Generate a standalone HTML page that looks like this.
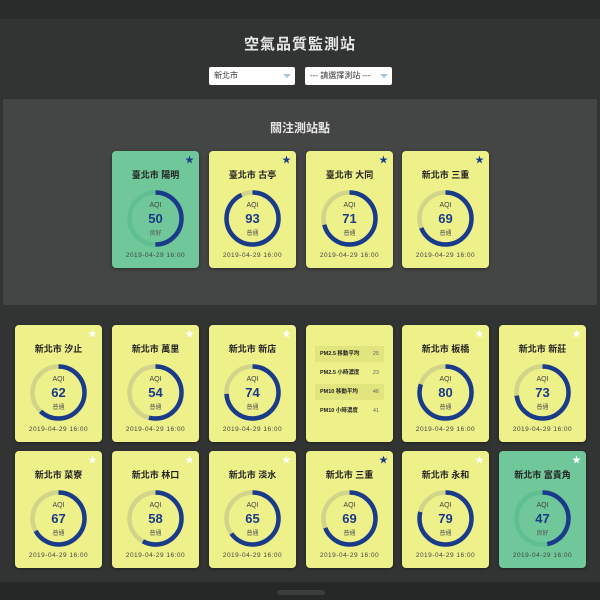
<!DOCTYPE html>
<html><head><meta charset="utf-8"><style>
*{margin:0;padding:0;box-sizing:border-box}
body{width:600px;height:600px;background:#323434;position:relative;overflow:hidden;font-family:"Liberation Sans","Noto Sans CJK TC",sans-serif}
.top{position:absolute;left:0;top:0;width:600px;height:19px;background:#2a2c2c}
.bot{position:absolute;left:0;top:582px;width:600px;height:18px;background:#262828}
.handle{position:absolute;left:277px;top:590px;width:48px;height:5px;border-radius:3px;background:#3c3e3e}
h1{position:absolute;top:33px;width:600px;text-align:center;color:#e6e6e6;font-size:15px;font-weight:bold;letter-spacing:1px}
.sel{position:absolute;top:67px;height:18px;background:#fff;border-radius:2px;font-size:8px;color:#333;padding:4px 5px;line-height:10px}
.sel:after{content:"";position:absolute;right:4px;top:7px;border:4px solid transparent;border-top:4px solid #a8c4dc}
.panel{position:absolute;left:3px;top:99px;width:594px;height:206px;background:#444545;border-radius:2px}
.ptitle{position:absolute;top:119px;width:600px;text-align:center;color:#e6e6e6;font-size:12px;font-weight:bold}
.c{position:absolute;width:87px;height:117px;background:#eef08a;border-radius:4px;box-shadow:0 1px 3px rgba(0,0,0,.4)}
.g{background:#6fc79a}
.c .t{position:absolute;top:17px;width:100%;text-align:center;font-size:9px;font-weight:bold;color:#222}
.c svg{position:absolute;left:13px;top:37px}
.c .a{position:absolute;top:51px;width:100%;text-align:center;font-size:7px;color:#444}
.c .n{position:absolute;top:60px;width:100%;text-align:center;font-size:13px;font-weight:bold;color:#1a3a8a}
.c .s{position:absolute;top:77px;width:100%;text-align:center;font-size:6px;color:#555}
.c .d{position:absolute;top:101px;width:100%;text-align:center;font-size:6.5px;color:#444;letter-spacing:.5px}
.st{position:absolute;right:5px;top:5px;font-size:9px;line-height:9px;color:#fff}
.st.b{color:#1a3a8a}
.row{position:absolute;left:9px;width:69px;height:16px;font-size:5.5px;font-weight:bold;color:#222;line-height:16px;padding-left:5px}
.row i{position:absolute;right:5px;font-style:normal;font-weight:normal;color:#666}
.row.h{background:#e2e47e}
</style></head><body>
<div class="top"></div>
<h1>空氣品質監測站</h1>
<div class="sel" style="left:209px;width:86px">新北市</div>
<div class="sel" style="left:305px;width:87px">--- 請選擇測站 ---</div>
<div class="panel"></div>
<div class="ptitle">關注測站點</div>

<div class="c g" style="left:112px;top:151px"><span class="st b">★</span><div class="t">臺北市 陽明</div><svg width="61" height="61"><circle cx="30.5" cy="30.5" r="26" fill="none" stroke="#5fbf92" stroke-width="4.5"/><circle cx="30.5" cy="30.5" r="26" fill="none" stroke="#1a3a8a" stroke-width="4.5" stroke-dasharray="81.7 200" transform="rotate(-90 30.5 30.5)"/></svg><div class="a">AQI</div><div class="n">50</div><div class="s">良好</div><div class="d">2019-04-29 16:00</div></div>
<div class="c" style="left:209px;top:151px"><span class="st b">★</span><div class="t">臺北市 古亭</div><svg width="61" height="61"><circle cx="30.5" cy="30.5" r="26" fill="none" stroke="#d2d48a" stroke-width="4.5"/><circle cx="30.5" cy="30.5" r="26" fill="none" stroke="#1a3a8a" stroke-width="4.5" stroke-dasharray="151.9 200" transform="rotate(-90 30.5 30.5)"/></svg><div class="a">AQI</div><div class="n">93</div><div class="s">普通</div><div class="d">2019-04-29 16:00</div></div>
<div class="c" style="left:306px;top:151px"><span class="st b">★</span><div class="t">臺北市 大同</div><svg width="61" height="61"><circle cx="30.5" cy="30.5" r="26" fill="none" stroke="#d2d48a" stroke-width="4.5"/><circle cx="30.5" cy="30.5" r="26" fill="none" stroke="#1a3a8a" stroke-width="4.5" stroke-dasharray="116 200" transform="rotate(-90 30.5 30.5)"/></svg><div class="a">AQI</div><div class="n">71</div><div class="s">普通</div><div class="d">2019-04-29 16:00</div></div>
<div class="c" style="left:402px;top:151px"><span class="st b">★</span><div class="t">新北市 三重</div><svg width="61" height="61"><circle cx="30.5" cy="30.5" r="26" fill="none" stroke="#d2d48a" stroke-width="4.5"/><circle cx="30.5" cy="30.5" r="26" fill="none" stroke="#1a3a8a" stroke-width="4.5" stroke-dasharray="112.7 200" transform="rotate(-90 30.5 30.5)"/></svg><div class="a">AQI</div><div class="n">69</div><div class="s">普通</div><div class="d">2019-04-29 16:00</div></div>

<div class="c" style="left:15px;top:325px"><span class="st">★</span><div class="t">新北市 汐止</div><svg width="61" height="61"><circle cx="30.5" cy="30.5" r="26" fill="none" stroke="#d2d48a" stroke-width="4.5"/><circle cx="30.5" cy="30.5" r="26" fill="none" stroke="#1a3a8a" stroke-width="4.5" stroke-dasharray="101.3 200" transform="rotate(-90 30.5 30.5)"/></svg><div class="a">AQI</div><div class="n">62</div><div class="s">普通</div><div class="d">2019-04-29 16:00</div></div>
<div class="c" style="left:112px;top:325px"><span class="st">★</span><div class="t">新北市 萬里</div><svg width="61" height="61"><circle cx="30.5" cy="30.5" r="26" fill="none" stroke="#d2d48a" stroke-width="4.5"/><circle cx="30.5" cy="30.5" r="26" fill="none" stroke="#1a3a8a" stroke-width="4.5" stroke-dasharray="88.2 200" transform="rotate(-90 30.5 30.5)"/></svg><div class="a">AQI</div><div class="n">54</div><div class="s">普通</div><div class="d">2019-04-29 16:00</div></div>
<div class="c" style="left:209px;top:325px"><span class="st">★</span><div class="t">新北市 新店</div><svg width="61" height="61"><circle cx="30.5" cy="30.5" r="26" fill="none" stroke="#d2d48a" stroke-width="4.5"/><circle cx="30.5" cy="30.5" r="26" fill="none" stroke="#1a3a8a" stroke-width="4.5" stroke-dasharray="120.9 200" transform="rotate(-90 30.5 30.5)"/></svg><div class="a">AQI</div><div class="n">74</div><div class="s">普通</div><div class="d">2019-04-29 16:00</div></div>
<div class="c" style="left:306px;top:325px">
<div class="row h" style="top:21px">PM2.5 移動平均<i>25</i></div>
<div class="row" style="top:40px">PM2.5 小時濃度<i>23</i></div>
<div class="row h" style="top:59px">PM10 移動平均<i>46</i></div>
<div class="row" style="top:78px">PM10 小時濃度<i>41</i></div>
</div>
<div class="c" style="left:402px;top:325px"><span class="st">★</span><div class="t">新北市 板橋</div><svg width="61" height="61"><circle cx="30.5" cy="30.5" r="26" fill="none" stroke="#d2d48a" stroke-width="4.5"/><circle cx="30.5" cy="30.5" r="26" fill="none" stroke="#1a3a8a" stroke-width="4.5" stroke-dasharray="130.7 200" transform="rotate(-90 30.5 30.5)"/></svg><div class="a">AQI</div><div class="n">80</div><div class="s">普通</div><div class="d">2019-04-29 16:00</div></div>
<div class="c" style="left:499px;top:325px"><span class="st">★</span><div class="t">新北市 新莊</div><svg width="61" height="61"><circle cx="30.5" cy="30.5" r="26" fill="none" stroke="#d2d48a" stroke-width="4.5"/><circle cx="30.5" cy="30.5" r="26" fill="none" stroke="#1a3a8a" stroke-width="4.5" stroke-dasharray="119.2 200" transform="rotate(-90 30.5 30.5)"/></svg><div class="a">AQI</div><div class="n">73</div><div class="s">普通</div><div class="d">2019-04-29 16:00</div></div>

<div class="c" style="left:15px;top:451px"><span class="st">★</span><div class="t">新北市 菜寮</div><svg width="61" height="61"><circle cx="30.5" cy="30.5" r="26" fill="none" stroke="#d2d48a" stroke-width="4.5"/><circle cx="30.5" cy="30.5" r="26" fill="none" stroke="#1a3a8a" stroke-width="4.5" stroke-dasharray="109.4 200" transform="rotate(-90 30.5 30.5)"/></svg><div class="a">AQI</div><div class="n">67</div><div class="s">普通</div><div class="d">2019-04-29 16:00</div></div>
<div class="c" style="left:112px;top:451px"><span class="st">★</span><div class="t">新北市 林口</div><svg width="61" height="61"><circle cx="30.5" cy="30.5" r="26" fill="none" stroke="#d2d48a" stroke-width="4.5"/><circle cx="30.5" cy="30.5" r="26" fill="none" stroke="#1a3a8a" stroke-width="4.5" stroke-dasharray="94.7 200" transform="rotate(-90 30.5 30.5)"/></svg><div class="a">AQI</div><div class="n">58</div><div class="s">普通</div><div class="d">2019-04-29 16:00</div></div>
<div class="c" style="left:209px;top:451px"><span class="st">★</span><div class="t">新北市 淡水</div><svg width="61" height="61"><circle cx="30.5" cy="30.5" r="26" fill="none" stroke="#d2d48a" stroke-width="4.5"/><circle cx="30.5" cy="30.5" r="26" fill="none" stroke="#1a3a8a" stroke-width="4.5" stroke-dasharray="106.2 200" transform="rotate(-90 30.5 30.5)"/></svg><div class="a">AQI</div><div class="n">65</div><div class="s">普通</div><div class="d">2019-04-29 16:00</div></div>
<div class="c" style="left:306px;top:451px"><span class="st b">★</span><div class="t">新北市 三重</div><svg width="61" height="61"><circle cx="30.5" cy="30.5" r="26" fill="none" stroke="#d2d48a" stroke-width="4.5"/><circle cx="30.5" cy="30.5" r="26" fill="none" stroke="#1a3a8a" stroke-width="4.5" stroke-dasharray="112.7 200" transform="rotate(-90 30.5 30.5)"/></svg><div class="a">AQI</div><div class="n">69</div><div class="s">普通</div><div class="d">2019-04-29 16:00</div></div>
<div class="c" style="left:402px;top:451px"><span class="st">★</span><div class="t">新北市 永和</div><svg width="61" height="61"><circle cx="30.5" cy="30.5" r="26" fill="none" stroke="#d2d48a" stroke-width="4.5"/><circle cx="30.5" cy="30.5" r="26" fill="none" stroke="#1a3a8a" stroke-width="4.5" stroke-dasharray="129 200" transform="rotate(-90 30.5 30.5)"/></svg><div class="a">AQI</div><div class="n">79</div><div class="s">普通</div><div class="d">2019-04-29 16:00</div></div>
<div class="c g" style="left:499px;top:451px"><span class="st">★</span><div class="t">新北市 富貴角</div><svg width="61" height="61"><circle cx="30.5" cy="30.5" r="26" fill="none" stroke="#5fbf92" stroke-width="4.5"/><circle cx="30.5" cy="30.5" r="26" fill="none" stroke="#1a3a8a" stroke-width="4.5" stroke-dasharray="76.8 200" transform="rotate(-90 30.5 30.5)"/></svg><div class="a">AQI</div><div class="n">47</div><div class="s">良好</div><div class="d">2019-04-29 16:00</div></div>

<div class="bot"></div><div class="handle"></div>
</body></html>
